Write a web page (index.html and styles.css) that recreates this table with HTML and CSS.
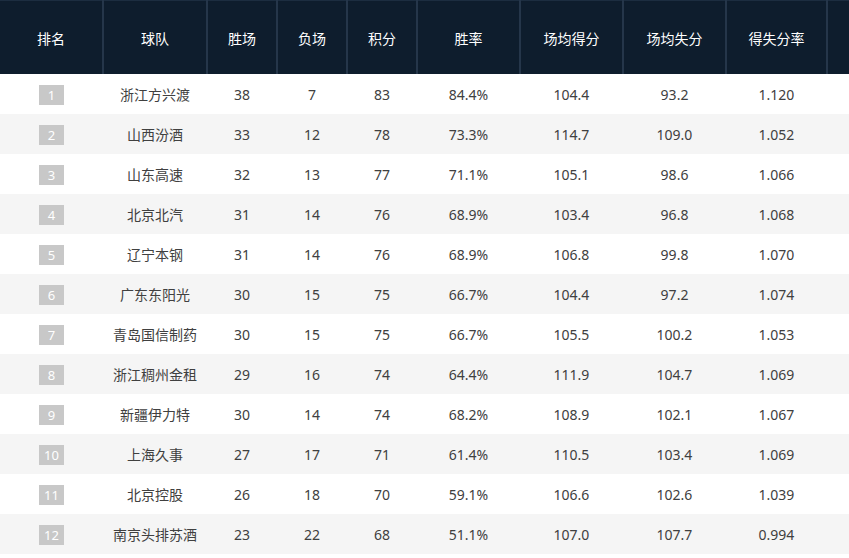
FILE: index.html
```html
<!DOCTYPE html>
<html lang="zh">
<head>
<meta charset="utf-8">
<title>积分榜</title>
<link rel="stylesheet" href="styles.css">
</head>
<body>
<table class="standings">
  <colgroup>
    <col class="c-rank"><col class="c-team"><col class="c-sm"><col class="c-sm"><col class="c-sm">
    <col class="c-md"><col class="c-md"><col class="c-md"><col class="c-last"><col class="c-extra">
  </colgroup>
  <thead>
    <tr>
      <th>排名</th><th>球队</th><th>胜场</th><th>负场</th><th>积分</th><th>胜率</th><th>场均得分</th><th>场均失分</th><th>得失分率</th><th></th>
    </tr>
  </thead>
  <tbody>
    <tr><td><span class="badge">1</span></td><td>浙江方兴渡</td><td>38</td><td>7</td><td>83</td><td>84.4%</td><td>104.4</td><td>93.2</td><td>1.120</td><td></td></tr>
    <tr><td><span class="badge">2</span></td><td>山西汾酒</td><td>33</td><td>12</td><td>78</td><td>73.3%</td><td>114.7</td><td>109.0</td><td>1.052</td><td></td></tr>
    <tr><td><span class="badge">3</span></td><td>山东高速</td><td>32</td><td>13</td><td>77</td><td>71.1%</td><td>105.1</td><td>98.6</td><td>1.066</td><td></td></tr>
    <tr><td><span class="badge">4</span></td><td>北京北汽</td><td>31</td><td>14</td><td>76</td><td>68.9%</td><td>103.4</td><td>96.8</td><td>1.068</td><td></td></tr>
    <tr><td><span class="badge">5</span></td><td>辽宁本钢</td><td>31</td><td>14</td><td>76</td><td>68.9%</td><td>106.8</td><td>99.8</td><td>1.070</td><td></td></tr>
    <tr><td><span class="badge">6</span></td><td>广东东阳光</td><td>30</td><td>15</td><td>75</td><td>66.7%</td><td>104.4</td><td>97.2</td><td>1.074</td><td></td></tr>
    <tr><td><span class="badge">7</span></td><td>青岛国信制药</td><td>30</td><td>15</td><td>75</td><td>66.7%</td><td>105.5</td><td>100.2</td><td>1.053</td><td></td></tr>
    <tr><td><span class="badge">8</span></td><td>浙江稠州金租</td><td>29</td><td>16</td><td>74</td><td>64.4%</td><td>111.9</td><td>104.7</td><td>1.069</td><td></td></tr>
    <tr><td><span class="badge">9</span></td><td>新疆伊力特</td><td>30</td><td>14</td><td>74</td><td>68.2%</td><td>108.9</td><td>102.1</td><td>1.067</td><td></td></tr>
    <tr><td><span class="badge">10</span></td><td>上海久事</td><td>27</td><td>17</td><td>71</td><td>61.4%</td><td>110.5</td><td>103.4</td><td>1.069</td><td></td></tr>
    <tr><td><span class="badge">11</span></td><td>北京控股</td><td>26</td><td>18</td><td>70</td><td>59.1%</td><td>106.6</td><td>102.6</td><td>1.039</td><td></td></tr>
    <tr><td><span class="badge">12</span></td><td>南京头排苏酒</td><td>23</td><td>22</td><td>68</td><td>51.1%</td><td>107.0</td><td>107.7</td><td>0.994</td><td></td></tr>
  </tbody>
</table>
</body>
</html>
```
FILE: styles.css
```css
html, body {
  margin: 0;
  padding: 0;
  background: #ffffff;
  overflow: hidden;
}
body {
  font-family: "Noto Sans", "Noto Sans CJK SC", sans-serif;
  color: #404040;
}
.standings {
  table-layout: fixed;
  border-collapse: collapse;
  width: 849px;
}
.c-rank { width: 103px; }
.c-team { width: 104px; }
.c-sm { width: 70px; }
.c-md { width: 103px; }
.c-last { width: 101px; }
.c-extra { width: 22px; }

.standings thead th {
  height: 73px;
  padding: 0;
  background: #0e1d2d;
  color: #ffffff;
  font-weight: normal;
  font-size: 14px;
  text-align: center;
  border-right: 2px solid #25364a;
  border-top: 1px solid #1c2d40;
}
.standings thead th:last-child {
  border-right: none;
}
.standings tbody td {
  height: 40px;
  padding: 0;
  text-align: center;
  font-size: 14px;
  white-space: nowrap;
}
.standings tbody tr:nth-child(even) td {
  background: #f5f5f5;
}
.badge {
  display: inline-block;
  width: 25px;
  height: 20px;
  line-height: 20px;
  background: #c8c8c8;
  color: #ffffff;
  font-size: 13px;
  vertical-align: middle;
}
```
